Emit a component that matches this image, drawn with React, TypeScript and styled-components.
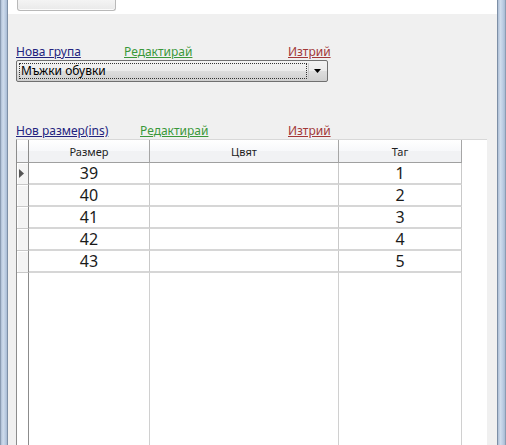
import React from "react";
import styled, { createGlobalStyle } from "styled-components";

const Global = createGlobalStyle`
  html, body { margin: 0; padding: 0; }
  body {
    width: 506px; height: 445px; overflow: hidden;
    font-family: "Noto Sans", "Open Sans", "DejaVu Sans", sans-serif;
    background: #f0f0f0;
  }
`;

const Window = styled.div`
  display: flex;
  width: 506px;
  height: 445px;
  overflow: hidden;
`;

const Frame = styled.div<{ $w: number; $side: "left" | "right" }>`
  width: ${(p) => p.$w}px;
  flex: none;
  background: linear-gradient(90deg, #aebfd6 0%, #cfdcec 35%, #bccde3 70%, #a9bbd3 100%);
  ${(p) =>
    p.$side === "left"
      ? "border-right: 1px solid #7d8fa6; border-left: 1px solid #8b9cb2;"
      : "border-left: 1px solid #7d8fa6; border-right: 1px solid #8b9cb2;"}
  box-sizing: border-box;
`;

const Content = styled.div`
  flex: 1;
  display: flex;
  flex-direction: column;
  min-width: 0;
`;

const TopStrip = styled.div`
  height: 14px;
  background: #ffffff;
  padding-left: 9px;
  flex: none;
  display: flex;
  align-items: flex-start;
`;

const TopButton = styled.div`
  width: 99px;
  height: 11px;
  box-sizing: border-box;
  border: 1px solid #b9b9b9;
  border-top: none;
  border-radius: 0 0 3px 3px;
  background: linear-gradient(#f4f4f4, #e9e9e9);
  box-shadow: inset 0 -1px 0 #fbfbfb;
`;

const Body = styled.div`
  flex: 1;
  display: flex;
  flex-direction: column;
  padding: 30px 10px 0 8px;
  min-height: 0;
`;

const LinkRow = styled.div`
  display: flex;
  height: 16px;
  align-items: flex-end;
  font-size: 12px;
  line-height: 16px;
`;

const Link = styled.a<{ $color: string; $w: number }>`
  display: block;
  width: ${(p) => p.$w}px;
  flex: none;
  white-space: nowrap;
  color: ${(p) => p.$color};
  text-decoration: underline;
  text-underline-offset: 1px;
  cursor: pointer;
`;

const Combo = styled.div`
  margin-top: 0px;
  width: 312px;
  height: 22px;
  box-sizing: border-box;
  border: 1px solid #707070;
  border-radius: 2px;
  background: linear-gradient(#f2f2f2 0%, #ebebeb 50%, #dddddd 51%, #cfcfcf 100%);
  display: flex;
  align-items: stretch;
  padding: 2px;
`;

const ComboText = styled.div`
  flex: 1;
  border: 1px dotted #333;
  font-size: 12px;
  line-height: 14px;
  color: #000;
  padding-left: 1px;
  display: flex;
  align-items: center;
`;

const ComboArrow = styled.div`
  width: 16px;
  flex: none;
  display: flex;
  align-items: center;
  justify-content: center;
  border-left: 1px solid #c8c8c8;
  margin-left: 1px;
`;

const Spacer = styled.div<{ $h: number }>`
  height: ${(p) => p.$h}px;
  flex: none;
`;

const Grid = styled.div`
  flex: 1;
  display: grid;
  grid-template-columns: 12px 121px 189px 123px 1fr;
  grid-template-rows: 23px repeat(5, 22px) 1fr;
  background: #ffffff;
  border-left: 1px solid #8c8c8c;
  border-top: 1px solid #d8d8d8;
  box-sizing: border-box;
`;

const HeadCell = styled.div`
  background: linear-gradient(#ffffff 0%, #f7f8fa 50%, #f1f2f4 51%, #f1f2f4 100%);
  border-right: 1px solid #a6a6a6;
  border-bottom: 1px solid #a0a0a0;
  font-size: 11px;
  color: #1e1e1e;
  display: flex;
  align-items: center;
  justify-content: center;
`;

const Corner = styled(HeadCell)`
  border-right: 1px solid #8c8c8c;
`;

const RowHead = styled.div`
  background: #f4f4f4;
  border-right: 1px solid #8c8c8c;
  border-bottom: 1px solid #c8c8c8;
  box-shadow: inset 1px 1px 0 #ffffff;
  display: flex;
  align-items: center;
  justify-content: flex-start;
  padding-left: 2px;
`;

const Cell = styled.div`
  border-right: 1px solid #c9c9c9;
  border-bottom: 2px solid #d6d6d6;
  font-size: 16px;
  color: #1a1a1a;
  display: flex;
  align-items: center;
  justify-content: center;
  line-height: 20px;
`;

const Filler = styled.div<{ $dark?: boolean }>`
  border-right: 1px solid ${(p) => (p.$dark ? "#8c8c8c" : "#d0d0d0")};
`;

const Blank = styled.div``;

const rows = [
  { size: "39", color: "", tag: "1" },
  { size: "40", color: "", tag: "2" },
  { size: "41", color: "", tag: "3" },
  { size: "42", color: "", tag: "4" },
  { size: "43", color: "", tag: "5" },
];

export default function App() {
  return (
    <>
      <Global />
      <Window>
        <Frame $w={8} $side="left" />
        <Content>
          <TopStrip>
            <TopButton />
          </TopStrip>
          <Body>
            <LinkRow>
              <Link $color="#23237e" $w={108}>Нова група</Link>
              <Link $color="#3a983a" $w={164}>Редактирай</Link>
              <Link $color="#a23838" $w={60}>Изтрий</Link>
            </LinkRow>
            <Combo>
              <ComboText>Мъжки обувки</ComboText>
              <ComboArrow>
                <svg width="7" height="4" viewBox="0 0 7 4">
                  <path d="M0 0 L7 0 L3.5 4 Z" fill="#000" />
                </svg>
              </ComboArrow>
            </Combo>
            <Spacer $h={41} />
            <LinkRow>
              <Link $color="#23237e" $w={124}>Нов размер(ins)</Link>
              <Link $color="#3a983a" $w={148}>Редактирай</Link>
              <Link $color="#a23838" $w={60}>Изтрий</Link>
            </LinkRow>
            <Grid>
              <Corner />
              <HeadCell>Размер</HeadCell>
              <HeadCell>Цвят</HeadCell>
              <HeadCell>Таг</HeadCell>
              <Blank />
              {rows.map((r, i) => (
                <React.Fragment key={r.size}>
                  <RowHead>
                    {i === 0 && (
                      <svg width="5" height="9" viewBox="0 0 5 9">
                        <path d="M0 0 L5 4.5 L0 9 Z" fill="#555" />
                      </svg>
                    )}
                  </RowHead>
                  <Cell>{r.size}</Cell>
                  <Cell>{r.color}</Cell>
                  <Cell>{r.tag}</Cell>
                  <Blank />
                </React.Fragment>
              ))}
              <Filler $dark />
              <Filler />
              <Filler />
              <Filler />
              <Blank />
            </Grid>
          </Body>
        </Content>
        <Frame $w={9} $side="right" />
      </Window>
    </>
  );
}
